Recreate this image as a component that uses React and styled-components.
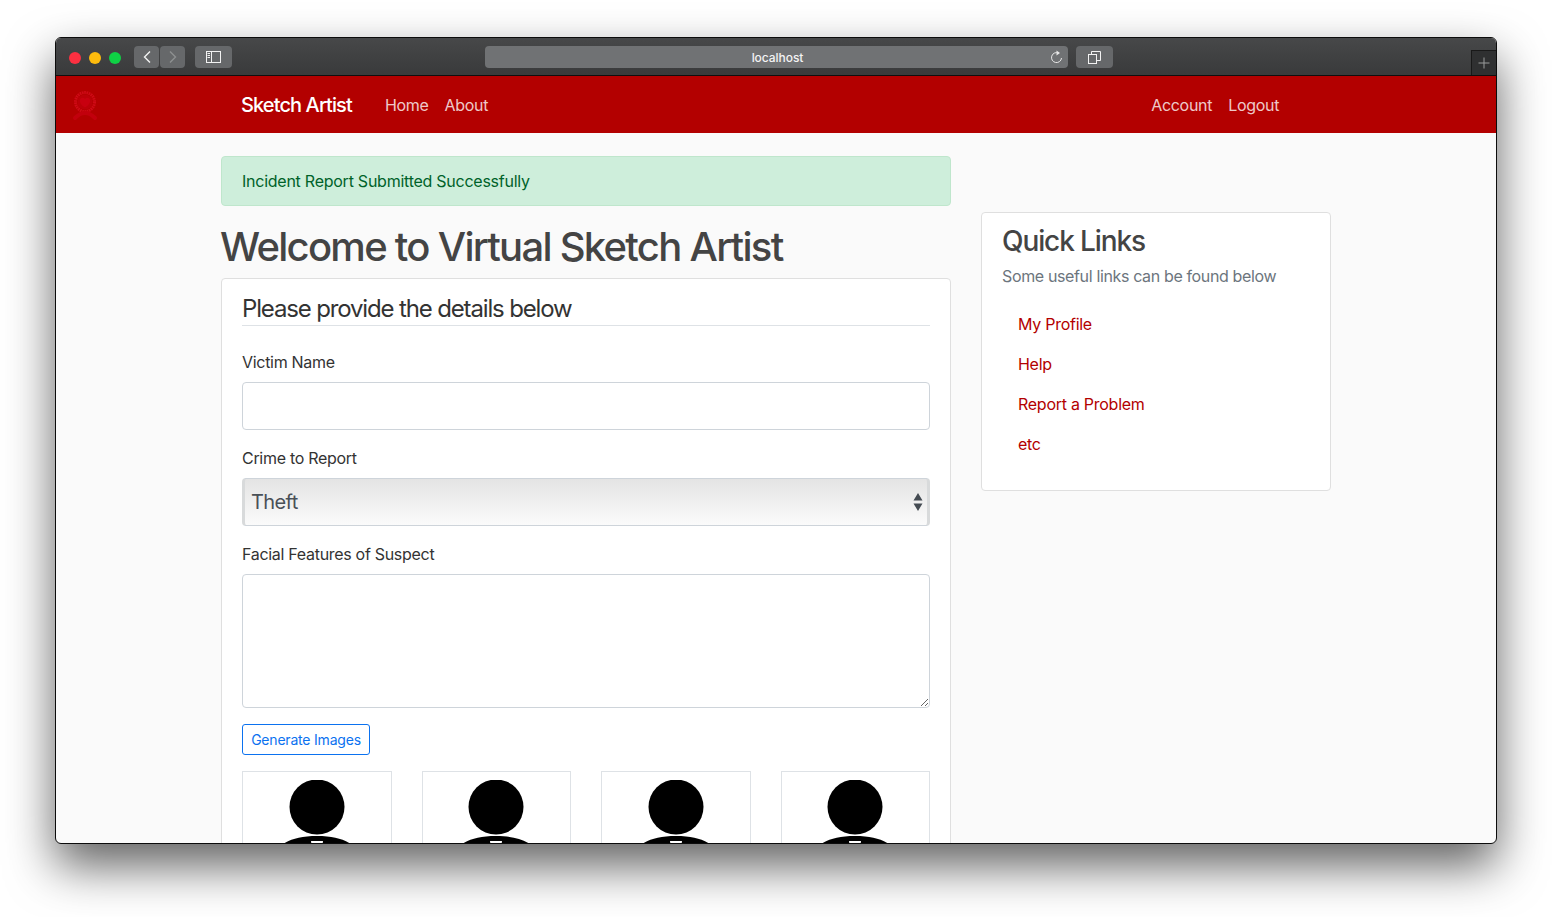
import styled, { createGlobalStyle } from 'styled-components'

const Global = createGlobalStyle`
html, body { margin: 0; padding: 0; background: #fff; }
body { width: 1552px; height: 917px; overflow: hidden; font-family: Inter, "Liberation Sans", sans-serif; }
* { box-sizing: border-box; }
`

const Page = styled.div`
width: 1552px;
height: 917px;
padding: 37px 55px 73px;
`

const Win = styled.div`
height: 807px;
border: 1px solid #0c0c0c;
border-radius: 6px;
overflow: hidden;
display: flex;
flex-direction: column;
background: #fafafa;
box-shadow: 0 22px 48px rgba(0, 0, 0, 0.62);
`

const Toolbar = styled.div`
height: 38px;
flex: none;
display: flex;
align-items: flex-start;
padding-top: 8px;
background: linear-gradient(#474849, #393a3b);
border-bottom: 1px solid #0f0f0f;
position: relative;
`

const Lights = styled.div`
display: flex;
gap: 8px;
padding: 6px 0 0 13px;
width: 78px;
`

const Light = styled.span`
width: 12px;
height: 12px;
border-radius: 50%;
background: ${p => p.color};
`

const ToolBtn = styled.div`
height: 22px;
width: ${p => p.w || '25px'};
margin-left: ${p => p.ml || 0};
border-radius: 4px;
background: #66686a;
display: flex;
align-items: center;
justify-content: center;
color: ${p => p.dim ? '#8e9091' : '#f2f2f2'};
`

const Address = styled.div`
width: 583px;
height: 22px;
margin-left: 253px;
border-radius: 4px;
background: #707274;
color: #f4f4f4;
font-size: 12px;
font-weight: 500;
letter-spacing: -0.05px;
padding-left: 2px;
display: flex;
align-items: center;
justify-content: center;
position: relative;
`

const Reload = styled.svg`
position: absolute;
right: 5px;
top: 4px;
`

const NewTab = styled.div`
position: absolute;
right: 0;
top: 12px;
width: 25px;
height: 25px;
padding-right: 1px;
background: #2f3031;
border-left: 1px solid #191919;
border-top: 1px solid #191919;
color: #9b9c9d;
display: flex;
align-items: center;
justify-content: center;
`

const Navbar = styled.nav`
height: 57px;
flex: none;
background: #b30000;
display: flex;
align-items: center;
position: relative;
padding-left: 185px;
`

const Logo = styled.svg`
position: absolute;
left: 15px;
top: 14px;
`

const Brand = styled.a`
color: #fff;
font-size: 20px;
font-weight: 500;
letter-spacing: -0.9px;
margin-right: 33px;
`

const NavLink = styled.a`
color: rgba(255, 255, 255, 0.8);
font-size: 16px;
margin-right: ${p => p.mr || '16px'};
letter-spacing: -0.3px;
`

const Body = styled.div`
flex: 1;
min-height: 0;
overflow: hidden;
padding: 23px 165px 0;
display: flex;
gap: 30px;
align-items: flex-start;
`

const Main = styled.main`
width: 730px;
flex: none;
`

const Alert = styled.div`
height: 50px;
background: #ceeedb;
border: 1px solid #bfe6cc;
border-radius: 4px;
padding: 0 20px;
display: flex;
align-items: center;
color: #00622a;
font-size: 16px;
letter-spacing: -0.25px;
margin-bottom: 16px;
`

const Title = styled.h1`
margin: 0 0 6px -1px;
font-size: 40px;
line-height: 50px;
font-weight: 500;
color: #444;
letter-spacing: -1.72px;
`

const Card = styled.div`
background: #fff;
border: 1px solid #dfdfdf;
border-radius: 4px;
padding: 13px 20px 0;
`

const Legend = styled.div`
font-size: 24px;
line-height: 33px;
color: #333;
letter-spacing: -1.15px;
border-bottom: 1px solid #dee2e6;
margin-bottom: 24px;
`

const Field = styled.div`
margin-bottom: 16px;
`

const Label = styled.label`
display: block;
font-size: 16px;
line-height: 24px;
color: #333;
letter-spacing: -0.3px;
margin-bottom: 8px;
`

const Input = styled.input`
display: block;
width: 100%;
height: 48px;
border: 1px solid #ced4da;
border-radius: 4px;
background: #fff;
`

const SelectBox = styled.div`
height: 48px;
border: 1px solid #ced4da;
border-left: 3px solid #d8dadb;
border-right: 3px solid #d8dadb;
border-radius: 4px;
background: linear-gradient(#e4e4e4, #fbfbfb);
display: flex;
align-items: center;
justify-content: space-between;
padding: 0 3px 0 6px;
font-size: 20px;
color: #495057;
letter-spacing: -0.6px;
`

const Textarea = styled.textarea`
display: block;
width: 100%;
height: 134px;
border: 1px solid #ced4da;
border-radius: 4px;
background: #fff;
`

const OutlineButton = styled.button`
display: block;
width: 128px;
height: 31px;
padding: 0;
background: #fff;
border: 1px solid #0b72f0;
border-radius: 3px;
color: #0b72f0;
font-family: inherit;
font-size: 14px;
letter-spacing: -0.2px;
margin-bottom: 16px;
`

const Faces = styled.div`
display: grid;
grid-template-columns: repeat(4, 1fr);
gap: 30px;
`

const Face = styled.div`
height: 160px;
border: 1px solid #dee2e6;
background: #fff;
display: flex;
justify-content: center;
padding-top: 8px;
`

const Side = styled.aside`
width: 350px;
flex: none;
margin-top: 56px;
height: 279px;
background: #fff;
border: 1px solid #dfdfdf;
border-radius: 4px;
padding: 11px 20px 0;
`

const SideTitle = styled.h3`
margin: 0 0 6px;
font-size: 28px;
line-height: 34px;
font-weight: 500;
color: #444;
letter-spacing: -1.1px;
`

const SideText = styled.p`
margin: 0 0 16px;
font-size: 16px;
line-height: 24px;
color: #6c757d;
letter-spacing: -0.36px;
`

const LinkList = styled.ul`
list-style: none;
margin: 0;
padding: 0;
`

const LinkItem = styled.li`
height: 40px;
padding: 8px 16px;
line-height: 24px;
font-size: 16px;
color: #b30000;
letter-spacing: -0.27px;
`

const PersonIcon = () => (
  <svg width="110" height="150" viewBox="0 0 110 150">
    <circle cx="55" cy="27" r="27.5" fill="#000" />
    <path d="M55 56 C72 56 82 59 92 66 C104 75 110 90 110 110 H0 C0 90 6 75 18 66 C28 59 38 56 55 56 Z" fill="#000" />
    <path d="M49 61 H61 L60 70 H50 Z" fill="#fff" />
  </svg>
)

const faces = [0, 1, 2, 3]
const links = ['My Profile', 'Help', 'Report a Problem', 'etc']

export default function App() {
  return (
    <Page>
      <Global />
      <Win>
        <Toolbar>
          <Lights>
            <Light color="#fc3041" />
            <Light color="#fdbb0d" />
            <Light color="#0fd145" />
          </Lights>
          <ToolBtn>
            <svg width="10" height="14" viewBox="0 0 10 14" fill="none" stroke="currentColor" strokeWidth="1.4">
              <path d="M8 1.5 L2.5 7 L8 12.5" />
            </svg>
          </ToolBtn>
          <ToolBtn dim="1" ml="1px">
            <svg width="10" height="14" viewBox="0 0 10 14" fill="none" stroke="currentColor" strokeWidth="1.4">
              <path d="M2 1.5 L7.5 7 L2 12.5" />
            </svg>
          </ToolBtn>
          <ToolBtn w="37px" ml="10px">
            <svg width="15" height="12" viewBox="0 0 15 12" fill="none" stroke="currentColor" strokeWidth="1">
              <rect x="0.5" y="0.5" width="14" height="11" />
              <path d="M5.5 0.5 V11.5 M1.5 2.5 H4 M1.5 4.5 H4 M1.5 6.5 H4" />
            </svg>
          </ToolBtn>
          <Address>
            localhost
            <Reload width="13" height="14" viewBox="0 0 13 14" fill="none" stroke="#e8e8e8" strokeWidth="1">
              <path d="M8.5 3 A5 5 0 1 0 11.5 8" />
              <path d="M6.5 0.5 L10 3 L6.5 5.5 Z" fill="#e8e8e8" stroke="none" />
            </Reload>
          </Address>
          <ToolBtn w="37px" ml="8px">
            <svg width="13" height="13" viewBox="0 0 13 13" fill="none" stroke="currentColor" strokeWidth="1">
              <rect x="0.5" y="3.5" width="8" height="9" />
              <path d="M3.5 3.5 V0.5 H12.5 V9.5 H8.5" />
            </svg>
          </ToolBtn>
          <NewTab>
            <svg width="12" height="12" viewBox="0 0 12 12" stroke="currentColor" strokeWidth="1">
              <path d="M6 0.5 V11.5 M0.5 6 H11.5" />
            </svg>
          </NewTab>
        </Toolbar>
        <Navbar>
          <Logo width="28" height="32" viewBox="0 0 28 32" fill="none">
            <circle cx="14" cy="12" r="9.5" stroke="#cf0a16" strokeWidth="3" strokeDasharray="1.6 0.7" />
            <circle cx="14" cy="12" r="7.5" fill="#bc0008" />
            <path d="M14 17.5 C10 15 8.5 12.5 9 10 C9.5 7.5 12.5 7 14 9 C15.5 7 18.5 7.5 19 10 C19.5 12.5 18 15 14 17.5 Z" fill="#c8000f" />
            <path d="M4 28 Q14 18 24 28" stroke="#c2000c" strokeWidth="4" strokeLinecap="round" />
          </Logo>
          <Brand>Sketch Artist</Brand>
          <NavLink>Home</NavLink>
          <NavLink mr="663px">About</NavLink>
          <NavLink>Account</NavLink>
          <NavLink>Logout</NavLink>
        </Navbar>
        <Body>
          <Main>
            <Alert>Incident Report Submitted Successfully</Alert>
            <Title>Welcome to Virtual Sketch Artist</Title>
            <Card>
              <Legend>Please provide the details below</Legend>
              <Field>
                <Label>Victim Name</Label>
                <Input />
              </Field>
              <Field>
                <Label>Crime to Report</Label>
                <SelectBox>
                  Theft
                  <svg width="12" height="20" viewBox="0 0 12 20" fill="#444b52">
                    <path d="M6 1 L10.5 8.5 H1.5 Z M6 19 L10.5 11.5 H1.5 Z" />
                  </svg>
                </SelectBox>
              </Field>
              <Field>
                <Label>Facial Features of Suspect</Label>
                <Textarea />
              </Field>
              <OutlineButton>Generate Images</OutlineButton>
              <Faces>
                {faces.map(f => (
                  <Face key={f}>
                    <PersonIcon />
                  </Face>
                ))}
              </Faces>
            </Card>
          </Main>
          <Side>
            <SideTitle>Quick Links</SideTitle>
            <SideText>Some useful links can be found below</SideText>
            <LinkList>
              {links.map(l => (
                <LinkItem key={l}>{l}</LinkItem>
              ))}
            </LinkList>
          </Side>
        </Body>
      </Win>
    </Page>
  )
}
